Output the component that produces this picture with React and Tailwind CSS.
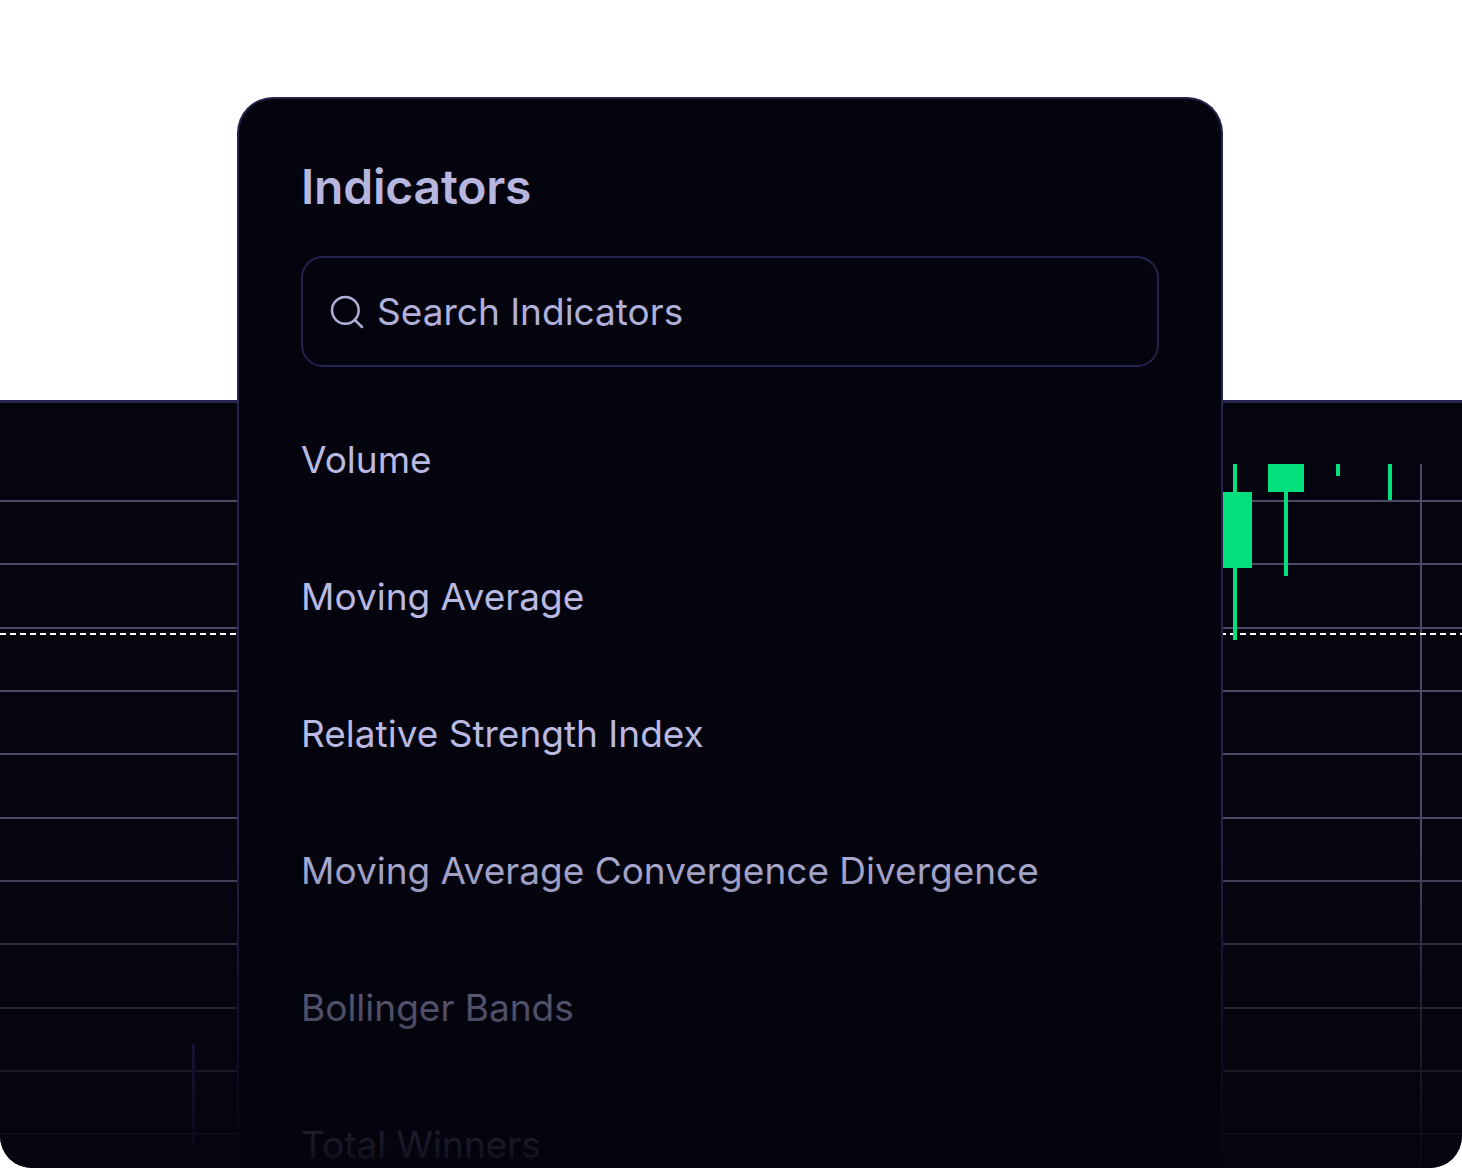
import { Search } from 'lucide-react';

const indicadores = [
    'Volume',
    'Moving Average',
    'Relative Strength Index',
    'Moving Average Convergence Divergence',
    'Bollinger Bands',
    'Total Winners',
];

const lineasY = [501, 564, 628, 691, 754, 818, 881, 944, 1008, 1071, 1134];

// velas visibles a la derecha del modal
const velas = [
    { x: 1233, y: 464, w: 4, h: 176 },
    { x: 1222, y: 492, w: 30, h: 76 },
    { x: 1268, y: 464, w: 36, h: 28 },
    { x: 1284, y: 492, w: 4, h: 84 },
    { x: 1336, y: 464, w: 4, h: 12 },
    { x: 1388, y: 464, w: 4, h: 36 },
];

function Grafico() {
    return (
        <svg className="block" width="1462" height="765" viewBox="0 403 1462 765">
            {lineasY.map(y => (
                <rect key={y} x="0" y={y - 1} width="1462" height="2" fill="#4a4a66" />
            ))}
            <rect x="1420" y="464" width="2" height="704" fill="#4a4a66" />
            <line x1="0" y1="634" x2="1462" y2="634" stroke="#ffffff" strokeWidth="2" strokeDasharray="6 4" />
            {velas.map((v, i) => (
                <rect key={i} x={v.x} y={v.y} width={v.w} height={v.h} fill="#04df7e" />
            ))}
            <rect x="192" y="1044" width="3" height="100" fill="#33336e" />
            <rect x="140" y="1120" width="2" height="20" fill="#1c1c3a" />
        </svg>
    );
}

export default function App() {
    return (
        <div className="relative w-[1462px] h-[1168px] overflow-hidden bg-white" style={{ fontFamily: 'Inter, "Noto Sans", sans-serif' }}>
            <div className="pt-[400px]">
                <div className="relative h-[768px] overflow-hidden rounded-b-[32px] border-t-[3px] border-[#25254f] bg-[#05050f]">
                    <Grafico />
                    <div className="absolute inset-x-0 bottom-0 h-[333px] bg-gradient-to-b from-[#05050f00] via-[#05050f90] via-50% to-[#05050ff2]" />
                </div>
            </div>

            <div className="absolute left-[237px] top-[97px] bottom-0 w-[986px] rounded-t-[36px] border-2 border-b-0 border-[#23234c] bg-[#04040f] px-[62px] pt-[57px]">
                <h2 className="text-[48px] leading-[62px] font-semibold tracking-[-0.2px] text-[#b6b6df]">Indicators</h2>

                <div className="mt-[38px] flex h-[111px] items-center gap-[10px] rounded-[22px] border-2 border-[#23234c] px-[24px]">
                    <Search size={40} strokeWidth={1.5} className="text-[#b0b0d8]" />
                    <span className="text-[37px] text-[#b0b0d8]">Search Indicators</span>
                </div>

                <ul className="mt-[24px]">
                    {indicadores.map(nombre => (
                        <li key={nombre} className="flex h-[137px] items-center text-[37px] text-[#b9b9e1]">
                            {nombre}
                        </li>
                    ))}
                </ul>

                <div className="absolute -left-[2px] -right-[2px] bottom-0 h-[333px] bg-gradient-to-b from-[#04040f00] via-[#04040f90] via-50% to-[#04040ff2]" />
            </div>
        </div>
    );
}
